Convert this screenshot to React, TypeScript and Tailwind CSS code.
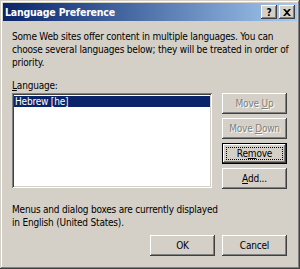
import React from "react";

const raised =
  "shadow-[inset_-1px_-1px_#404040,inset_1px_1px_#ffffff,inset_-2px_-2px_#808080,inset_2px_2px_#d4d0c8]";
const sunken =
  "shadow-[inset_1px_1px_#808080,inset_-1px_-1px_#ffffff,inset_2px_2px_#404040,inset_-2px_-2px_#d4d0c8]";

const Btn: React.FC<{
  children: React.ReactNode;
  disabled?: boolean;
  focused?: boolean;
}> = ({ children, disabled, focused }) => (
  <div
    className={`relative flex h-[21px] w-[65px] items-center justify-center bg-[#d4d0c8] ${
      focused
        ? "border border-black shadow-[inset_-1px_-1px_#404040,inset_1px_1px_#ffffff,inset_-2px_-2px_#808080]"
        : raised
    }`}
  >
    {focused && (
      <div className="absolute inset-[3px] border border-dotted border-black" />
    )}
    <span
      className={
        disabled
          ? "text-[#808080] [text-shadow:1px_1px_0_#ffffff]"
          : "text-black"
      }
    >
      {children}
    </span>
  </div>
);

const App: React.FC = () => {
  return (
    <div
      className="flex h-[269px] w-[300px] flex-col overflow-hidden bg-[#d4d0c8] p-[3px] text-[10px] leading-[13px] tracking-[-0.2px] text-black shadow-[inset_-1px_-1px_#404040,inset_1px_1px_#d4d0c8,inset_-2px_-2px_#808080,inset_2px_2px_#ffffff]"
      style={{ fontFamily: '"DejaVu Sans Condensed", "DejaVu Sans", sans-serif' }}
    >
      {/* title bar */}
      <div className="flex h-[18px] items-center justify-between bg-gradient-to-r from-[#0a246a] to-[#a6caf0] pl-[2px] pr-[2px]">
        <span className="text-[10.5px] font-bold text-white">Language Preference</span>
        <div className="flex">
          <div className={`flex h-[14px] w-[16px] items-center justify-center bg-[#d4d0c8] font-bold ${raised}`}>
            ?
          </div>
          <div className={`ml-[2px] flex h-[14px] w-[16px] items-center justify-center bg-[#d4d0c8] ${raised}`}>
            <svg width="8" height="7" viewBox="0 0 8 7">
              <path d="M0 0h2l2 2 2-2h2L5 3.5 8 7H6L4 5 2 7H0l3-3.5z" fill="#000" />
            </svg>
          </div>
        </div>
      </div>

      <div className="flex flex-1 flex-col pl-[9px]">
        <p className="mt-[9px] whitespace-nowrap">
          Some Web sites offer content in multiple languages. You can
          <br />
          choose several languages below; they will be treated in order of
          <br />
          priority.
        </p>

        <div className="mt-[10px]">
          <u className="underline-offset-1">L</u>anguage:
        </div>

        <div className="mt-[1px] flex gap-[10px]">
          <div className={`h-[95px] w-[200px] bg-white p-[2px] ${sunken}`}>
            <div className="mt-[1px] h-[11px] bg-[#0a246a] px-[1px] leading-[11px] text-white">
              Hebrew [he]
            </div>
          </div>
          <div className="flex flex-col gap-[4px]">
            <Btn disabled>
              Move <u>U</u>p
            </Btn>
            <Btn disabled>
              Move <u>D</u>own
            </Btn>
            <Btn focused>
              Re<u>m</u>ove
            </Btn>
            <Btn>
              <u>A</u>dd...
            </Btn>
          </div>
        </div>

        <p className="mt-[14px] whitespace-nowrap">
          Menus and dialog boxes are currently displayed
          <br />
          in English (United States).
        </p>

        <div className="mt-[6px] flex justify-end gap-[7px] pr-[10px]">
          <Btn>OK</Btn>
          <Btn>Cancel</Btn>
        </div>
      </div>
    </div>
  );
};

export default App;
